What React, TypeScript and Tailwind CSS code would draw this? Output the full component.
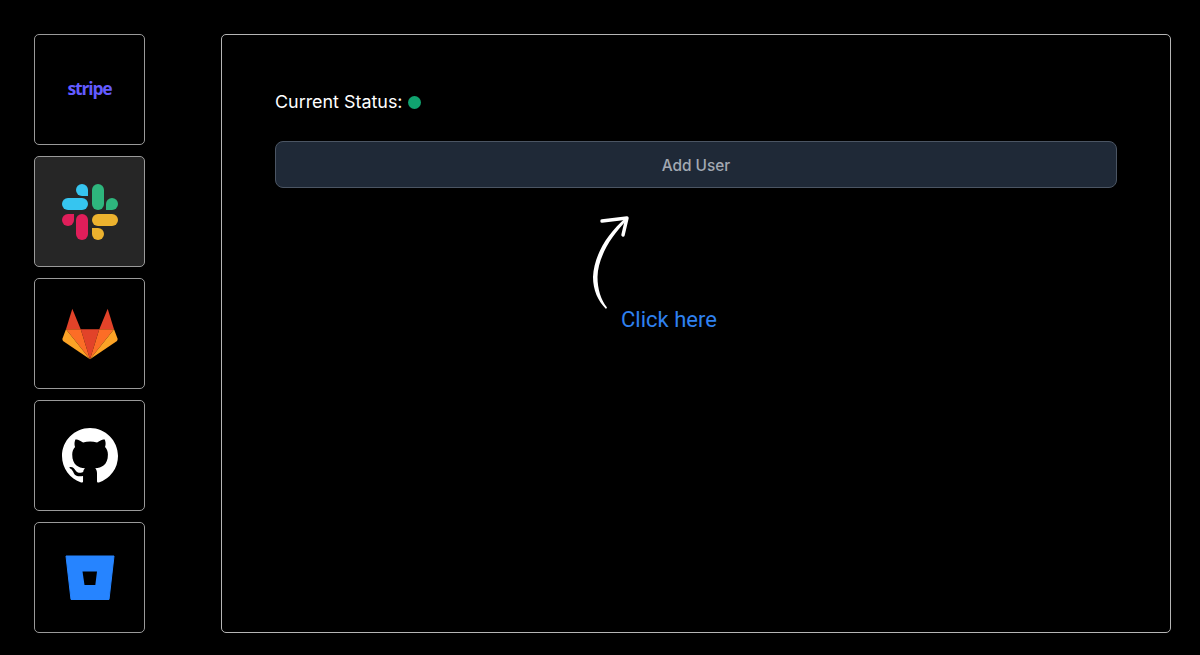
export default function App() {
  const card = "w-[111px] h-[111px] rounded-[5px] border border-[#9a9a9a] flex items-center justify-center";
  return (
    <div className="w-[1200px] h-[655px] bg-black flex gap-[76px] pl-[34px] pt-[34px] font-['Inter',sans-serif] overflow-hidden">
      <div className="flex flex-col gap-[11px]">
        <div className={card + " pb-[2px]"}>
          <span className="font-['Open_Sans',sans-serif] font-bold text-[#635bff] text-[17.5px] leading-none tracking-[-1.15px]">stripe</span>
        </div>
        <div className={card + " bg-[#262626]"}>
          <svg width="56" height="56" viewBox="0 0 56 56">
            <path fill="#36C5F0" d="M26 12H20a6 6 0 1 1 6-6Z" />
            <rect fill="#36C5F0" x="0" y="14" width="26" height="12" rx="6" />
            <rect fill="#2EB67D" x="30" y="0" width="12" height="26" rx="6" />
            <path fill="#2EB67D" d="M44 26V20a6 6 0 1 1 6 6Z" />
            <path fill="#E01E5A" d="M12 30V36a6 6 0 1 1-6-6Z" />
            <rect fill="#E01E5A" x="14" y="30" width="12" height="26" rx="6" />
            <rect fill="#ECB22E" x="30" y="30" width="26" height="12" rx="6" />
            <path fill="#ECB22E" d="M30 44H36a6 6 0 1 1-6 6Z" />
          </svg>
        </div>
        <div className={card}>
          <svg width="56" height="52" viewBox="0 0 56 52">
            <polygon fill="#e24329" points="10.3,0.7 4,21.3 18.7,21.3" />
            <polygon fill="#e24329" points="45.7,0.7 52,21.3 37.3,21.3" />
            <polygon fill="#e24329" points="18.7,21.3 37.3,21.3 28,51.3" />
            <polygon fill="#fc6d26" points="4,21.3 18.7,21.3 28,51.3" />
            <polygon fill="#fc6d26" points="52,21.3 37.3,21.3 28,51.3" />
            <polygon fill="#fca326" points="4,21.3 0.3,31 1,33 28,51.3" />
            <polygon fill="#fca326" points="52,21.3 55.7,31 55,33 28,51.3" />
          </svg>
        </div>
        <div className={card}>
          <svg width="56" height="56" viewBox="0 0 16 16" fill="#ffffff">
            <path d="M8 0C3.58 0 0 3.58 0 8c0 3.54 2.29 6.53 5.47 7.59.4.07.55-.17.55-.38 0-.19-.01-.82-.01-1.49-2.01.37-2.53-.49-2.69-.94-.09-.23-.48-.94-.82-1.13-.28-.15-.68-.52-.01-.53.63-.01 1.08.58 1.23.82.72 1.21 1.87.87 2.33.66.07-.52.28-.87.51-1.07-1.78-.2-3.64-.89-3.64-3.95 0-.87.31-1.59.82-2.15-.08-.2-.36-1.02.08-2.12 0 0 .67-.21 2.2.82.64-.18 1.32-.27 2-.27.68 0 1.36.09 2 .27 1.53-1.04 2.2-.82 2.2-.82.44 1.1.16 1.92.08 2.12.51.56.82 1.27.82 2.15 0 3.07-1.87 3.75-3.65 3.95.29.25.54.73.54 1.48 0 1.07-.01 1.93-.01 2.2 0 .21.15.46.55.38A8.013 8.013 0 0016 8c0-4.42-3.58-8-8-8z" />
          </svg>
        </div>
        <div className={card}>
          <svg width="50" height="46" viewBox="0 0 50 46">
            <path
              fill="#2684ff"
              stroke="#2684ff"
              strokeWidth="1"
              strokeLinejoin="round"
              d="M1 1H49L44 44.5H6Z"
            />
            <polygon fill="#000000" points="17.5,16.5 32,16.5 30.3,30 19.5,30" />
          </svg>
        </div>
      </div>
      <div className="w-[950px] h-[599px] rounded-[5px] border border-[#b5b5b5] px-[53px] pt-[55px]">
        <div className="flex items-center h-[24px] gap-[6px] text-white text-[17.9px] leading-none">
          <span>Current Status:</span>
          <span className="w-[13px] h-[13px] rounded-full bg-[#10a36f]" />
        </div>
        <button className="mt-[27px] w-[842px] h-[47px] pt-[2px] rounded-[8px] border border-[#4b5563] bg-[#1f2937] text-[#a3a9b3] text-[15.4px] font-medium">
          Add User
        </button>
        <div className="mt-[27px] ml-[314px]">
          <svg className="block" width="44" height="94" viewBox="0 0 44 94">
            <path fill="#ffffff" d="M17 94C9 86 4 75 4 62C5 41 17 20 37 2.5L38.5 4.5C21 22 9 43 8.5 62C8.5 74 12 85 18 92.5Z" />
            <path fill="none" stroke="#ffffff" strokeWidth="3.4" strokeLinecap="round" strokeLinejoin="round" d="M13 6L38 3L34 20" />
          </svg>
          <div className="-mt-[1px] ml-[32px] text-[#2f81f0] font-['Roboto',sans-serif] text-[22px] leading-[24px]">Click here</div>
        </div>
      </div>
    </div>
  );
}
